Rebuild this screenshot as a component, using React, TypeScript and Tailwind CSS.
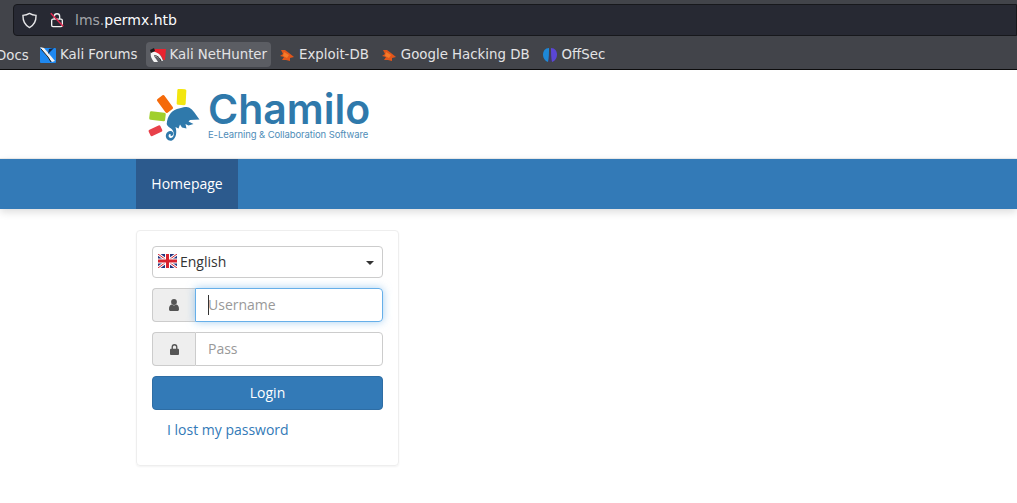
import React from "react";

const Shield = () => (
  <svg width="15" height="17" viewBox="0 0 16 17" fill="none" stroke="#e6e6e8" strokeWidth="1.5">
    <path d="M8 1 C10 2.2 12.6 2.9 15 3 C15.1 9 13 13.6 8 16 C3 13.6 .9 9 1 3 C3.4 2.9 6 2.2 8 1Z" />
  </svg>
);

const BrokenLock = () => (
  <svg width="16" height="16" viewBox="0 0 16 18" fill="none">
    <rect x="2" y="8" width="12" height="8.5" rx="1.5" stroke="#f2f2f2" strokeWidth="1.5" />
    <path d="M5 8V5a3 3 0 0 1 6 0v3" stroke="#f2f2f2" strokeWidth="1.5" />
    <path d="M1 1.5 15 16" stroke="#e22850" strokeWidth="1.7" />
  </svg>
);

const KaliForums = () => (
  <svg width="16" height="16" viewBox="0 0 16 16">
    <rect width="16" height="15" rx="1" y="1" fill="#1e88f0" />
    <path d="M0 0 L4 1 L10 8 L15 14 L12 15 L6 8Z" fill="#f2f2f2" />
    <path d="M9 2 L14 1 L8 7Z" fill="#13294b" />
    <path d="M1 2 L8 10 L11 15" stroke="#222" strokeWidth="1" fill="none" />
  </svg>
);

const NetHunter = () => (
  <svg width="16" height="16" viewBox="0 0 16 16">
    <path d="M3 2 L16 2 L15 13 L13 13 C12 8 8 6 4 7Z" fill="#e8232f" />
    <path d="M1 5 C5 4 11 6 13 14 L11 14 C9 10 6 9 4.5 10 C6 12 7 13 8 15 L4 15 C2 12 0 10 1 5Z" fill="#f4f4f4" />
    <path d="M0 3 L4 1 L5 4 L1 6Z" fill="#1b1b1b" />
    <path d="M4 9 C7 8 10 11 11 14" stroke="#1b1b1b" strokeWidth="1" fill="none" />
  </svg>
);

const Bug = () => (
  <svg width="16" height="14" viewBox="0 0 16 14">
    <path d="M2 2 L6 2 L10 5 L15 9 L11 10 L11 13 L7 12 L3 12 L5 9 L1 8 L4 6Z" fill="#e2561a" />
    <path d="M5 4 L10 7 L8 10 L4 8Z" fill="#f47a2a" />
  </svg>
);

const OffSec = () => (
  <svg width="16" height="16" viewBox="0 0 16 16">
    <path d="M7 1 C3 1 1 4 1 8 C1 11 3 14 6 15 C7 11 7 5 7 1Z" fill="#1e88d8" />
    <path d="M9 1 C13 1 15 4 15 8 C15 11 13 14 10 15 C9 11 9 5 9 1Z" fill="#5a46d6" />
    <path d="M8 3 L8.6 15 L7.4 15Z" fill="#3a2f8a" />
  </svg>
);

const Chameleon = () => (
  <svg width="53" height="54" viewBox="0 0 53 54" className="shrink-0">
    <rect x="29" y="0" width="9" height="16" rx="1.5" fill="#f3e60f" transform="rotate(3 33.5 8)" />
    <rect x="12.5" y="6.5" width="9" height="17" rx="1.5" fill="#f56a0a" transform="rotate(-36 17 15)" />
    <rect x="1.5" y="23" width="16" height="8.5" rx="1.5" fill="#a0cf2c" transform="rotate(7 9.5 27)" />
    <rect x="1" y="38.5" width="13" height="7" rx="1.5" fill="#e8404a" transform="rotate(-25 7 42)" />
    <path
      d="M18.7 35 C19.5 27 23 21 32 19.3 C36 18 39 17.5 41 18.5 C45 20.5 48 26 51.5 30.5 L42 31 L40.5 32.5 L45.5 35 L40.5 36.5 L37.5 35 L38.5 39.5 L34 38.5 L32 35.5 L30.5 39.5 L27.5 38 C29 43 28.5 49 24 51.5 C20 52.5 17 49 18 45.5 C19 42 23 41 25 43.5 C26 45.5 24 47.5 22.5 47 C23.5 45 21.5 44 20.7 46 C20 48.5 22.5 49.7 24.5 48.3 C26.5 46.5 26.3 42 23 39.5 C21 38 19 37 18.7 35Z"
      fill="#2f79ab"
    />
  </svg>
);

const Flag = () => (
  <svg width="19" height="14" viewBox="0 0 19 14" className="shrink-0">
    <rect width="19" height="14" fill="#27367f" />
    <path d="M0 0 19 14M19 0 0 14" stroke="#fff" strokeWidth="3" />
    <path d="M0 0 19 14M19 0 0 14" stroke="#d8232f" strokeWidth="1" />
    <path d="M9.5 0V14M0 7H19" stroke="#fff" strokeWidth="5" />
    <path d="M9.5 0V14M0 7H19" stroke="#d8232f" strokeWidth="3" />
  </svg>
);

const UserIcon = () => (
  <svg width="10" height="12" viewBox="0 0 10 12" fill="#555">
    <circle cx="5" cy="3" r="2.9" />
    <path d="M0 10.2 C0 7.5 1 6 2.6 5.6 C4 6.7 6 6.7 7.4 5.6 C9 6 10 7.5 10 10.2 C10 11.3 9.3 12 8.4 12 H1.6 C.7 12 0 11.3 0 10.2Z" />
  </svg>
);

const LockIcon = () => (
  <svg width="9" height="11" viewBox="0 0 10 12">
    <path d="M2.5 5.5V3.2a2.5 2.5 0 0 1 5 0V5.5" fill="none" stroke="#555" strokeWidth="1.5" />
    <rect y="5.3" width="10" height="6.7" rx="1" fill="#555" />
  </svg>
);

function Bookmark({ icon, label, active }: { icon: React.ReactNode; label: string; active?: boolean }) {
  return (
    <div className={`flex h-[25px] items-center gap-[4px] rounded-[4px] px-[4px] ${active ? "bg-[#5b5d63]" : ""}`}>
      <span className="flex w-[16px] shrink-0 items-center justify-center">{icon}</span>
      <span className="whitespace-nowrap">{label}</span>
    </div>
  );
}

export default function App() {
  return (
    <div className="flex h-[503px] w-[1017px] flex-col overflow-hidden bg-white font-['Open_Sans',sans-serif] text-[14px] text-[#333]">
      <header className="h-[70px] shrink-0 border-b border-[#0c0c0d] bg-[#42444a] font-['DejaVu_Sans',sans-serif]">
        <div className="pl-[13px] pt-[4px]">
          <div className="flex h-[32px] items-center rounded-l-[4px] border border-[#17181c] bg-[#272933] pl-[7px] text-[14px]">
            <span className="flex w-[16px] justify-center"><Shield /></span>
            <span className="ml-[12px] flex w-[16px] justify-center"><BrokenLock /></span>
            <span className="ml-[10px] pt-[1px] text-[#a3a4a9]">lms.</span>
            <span className="pt-[1px] text-[#fbfbfe]">permx.htb</span>
          </div>
        </div>
        <nav className="relative mt-[6px] flex items-center gap-[4px] pl-[36px] text-[13.33px] text-[#e3e3e5]">
          <span className="absolute left-[-4px] top-[4px]">Docs</span>
          <Bookmark icon={<KaliForums />} label="Kali Forums" />
          <Bookmark active icon={<NetHunter />} label="Kali NetHunter" />
          <Bookmark icon={<Bug />} label="Exploit-DB" />
          <Bookmark icon={<Bug />} label="Google Hacking DB" />
          <Bookmark icon={<OffSec />} label="OffSec" />
        </nav>
      </header>

      <div className="flex h-[89px] shrink-0 items-start border-b border-[#eeeeee] pl-[148px] pt-[19px]">
        <Chameleon />
        <div className="ml-[7px] flex flex-col text-[#2f79ab]">
          <span className="font-['Inter',sans-serif] text-[41px] font-semibold leading-[40px]">Chamilo</span>
          <span className="whitespace-nowrap font-['Inter',sans-serif] text-[9.5px] leading-[11px] tracking-[-0.1px] text-[#4f8db8]">E-Learning &amp; Collaboration Software</span>
        </div>
      </div>

      <nav className="h-[50px] shrink-0 bg-[#337ab7] pl-[136px] shadow-[0_3px_8px_rgba(0,0,0,0.14)]">
        <a className="flex h-full w-[102px] items-center justify-center bg-[#2c5a8d] pb-[2px] text-[14px] text-white">Homepage</a>
      </nav>

      <div className="pl-[136px] pt-[21px]">
        <section className="flex h-[236px] w-[263px] flex-col rounded-[4px] border border-[#eeeeee] px-[15px] pt-[15px] shadow-[0_1px_2px_rgba(0,0,0,0.05)]">
          <div className="flex h-[32px] items-center justify-between rounded-[4px] border border-[#cccccc] pl-[5px] pr-[8px]">
            <span className="flex items-center gap-[3px] pb-[2px] text-[#333]"><Flag />English</span>
            <span className="mt-[2px] h-0 w-0 border-x-[4px] border-t-[4px] border-x-transparent border-t-[#333]" />
          </div>

          <div className="mt-[10px] flex h-[34px]">
            <span className="flex w-[43px] items-center justify-center rounded-l-[4px] border border-r-0 border-[#cccccc] bg-[#eeeeee]"><UserIcon /></span>
            <div className="relative flex flex-1 items-center rounded-r-[4px] border border-[#66afe9] pb-[2px] pl-[12px] text-[#999] shadow-[0_0_8px_rgba(102,175,233,0.6)]">
              <span className="absolute left-[12px] top-[6px] h-[20px] w-px bg-[#333]" />
              Username
            </div>
          </div>

          <div className="mt-[10px] flex h-[34px]">
            <span className="flex w-[43px] items-center justify-center rounded-l-[4px] border border-r-0 border-[#cccccc] bg-[#eeeeee]"><LockIcon /></span>
            <div className="flex flex-1 items-center rounded-r-[4px] border border-[#cccccc] pb-[2px] pl-[12px] text-[#999]">Pass</div>
          </div>

          <button className="mt-[10px] h-[34px] w-full rounded-[4px] border border-[#2e6da4] bg-[#337ab7] pb-[2px] text-white">Login</button>

          <a className="mt-[10px] pl-[15px] leading-[20px] text-[#337ab7]">I lost my password</a>
        </section>
      </div>
    </div>
  );
}
